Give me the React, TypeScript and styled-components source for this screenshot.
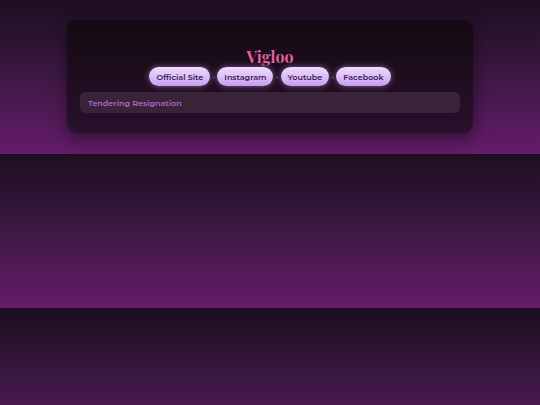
import React from 'react';
import styled, { createGlobalStyle } from 'styled-components';

const GlobalStyle = createGlobalStyle`
  html {
    margin: 0;
  }
  body {
    margin: 0;
    padding: 20px 0 21px;
    background: linear-gradient(180deg, #1c0e1f 0%, #3a1840 45%, #651c6b 100%);
    font-family: Montserrat, "Open Sans", "DejaVu Sans", sans-serif;
  }
`;

const links = ['Official Site', 'Instagram', 'Youtube', 'Facebook'];

const App: React.FC = () => {
  return (
    <>
      <GlobalStyle />
      <Card>
        <Title>Vigloo</Title>
        <LinkRow>
          {links.map((link, i) => (
            <React.Fragment key={link}>
              {i > 0 && <Dash>-</Dash>}
              <Pill>{link}</Pill>
            </React.Fragment>
          ))}
        </LinkRow>
        <Field>Tendering Resignation</Field>
      </Card>
    </>
  );
};

const Card = styled.div`
  width: 406px;
  margin: 0 auto;
  box-sizing: border-box;
  padding: 27px 13px 20px;
  border-radius: 9px;
  background: linear-gradient(180deg, #140a13 0%, #1e0d1e 50%, #29102c 100%);
  box-shadow: 0 6px 18px rgba(0, 0, 0, 0.45);
  display: flex;
  flex-direction: column;
  align-items: stretch;
`;

const Title = styled.div`
  text-align: center;
  font-family: "Playfair Display", "Liberation Serif", serif;
  font-weight: 700;
  font-size: 16px;
  line-height: 19px;
  color: #e0609a;
`;

const LinkRow = styled.div`
  display: flex;
  justify-content: center;
  align-items: center;
  gap: 2px;
  margin-top: 1px;
`;

const Dash = styled.span`
  color: #9a8a9c;
  font-size: 8px;
  line-height: 1;
`;

const Pill = styled.span`
  display: inline-flex;
  align-items: center;
  height: 19px;
  padding: 0 7px;
  border-radius: 10px;
  background: linear-gradient(180deg, #eddcfd 0%, #d9b9f7 60%, #c69cef 100%);
  box-shadow: 0 0 6px rgba(205, 160, 245, 0.55);
  color: #3b1b4c;
  font-size: 8px;
  font-weight: 600;
  white-space: nowrap;
`;

const Field = styled.div`
  margin-top: 6px;
  height: 21px;
  box-sizing: border-box;
  padding: 0 8px;
  display: flex;
  align-items: center;
  border-radius: 5px;
  background: #3a2339;
  color: #a86ac9;
  font-size: 8px;
  font-weight: 600;
`;

export default App;
